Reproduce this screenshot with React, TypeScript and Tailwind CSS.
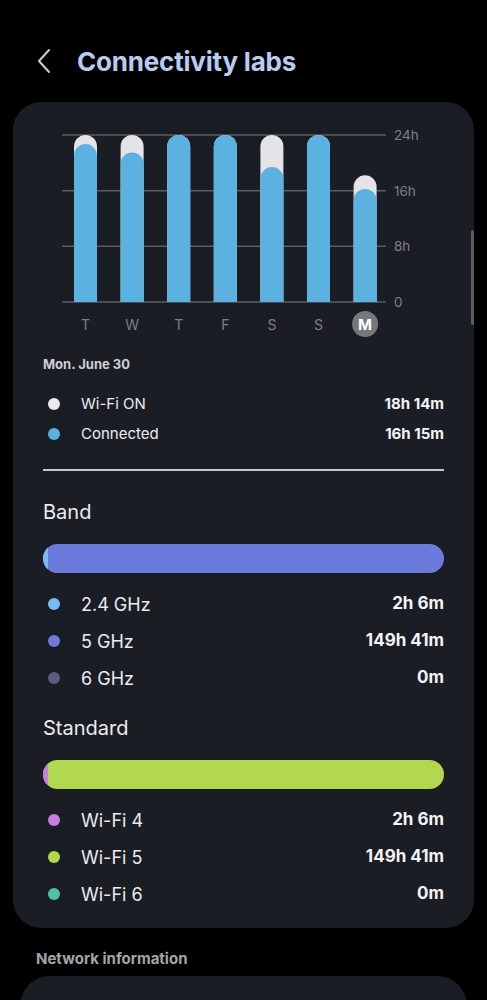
import React from 'react';

const FONT = { fontFamily: 'Inter, "Noto Sans", sans-serif' };

type Bar = { day: string; on: number; conn: number; today?: boolean };

// hours of Wi-Fi on / connected per day
const week: Bar[] = [
  { day: 'T', on: 24, conn: 22.7 },
  { day: 'W', on: 24, conn: 21.5 },
  { day: 'T', on: 24, conn: 24 },
  { day: 'F', on: 24, conn: 24 },
  { day: 'S', on: 24, conn: 19.4 },
  { day: 'S', on: 24, conn: 24 },
  { day: 'M', on: 18.2, conn: 16.25, today: true },
];

const BASE = 182;
const SCALE = 167 / 24;
const BAR_W = 23;

const barPath = (cx: number, top: number) => {
  const r = BAR_W / 2;
  const x0 = cx - r;
  const x1 = cx + r;
  return `M${x0} ${BASE} L${x0} ${top + r} A${r} ${r} 0 0 1 ${x1} ${top + r} L${x1} ${BASE} Z`;
};

const UsageChart = () => {
  const grid = [
    { y: 15, label: '24h' },
    { y: 70.7, label: '16h' },
    { y: 126.3, label: '8h' },
    { y: 182, label: '0' },
  ];
  return (
    <svg width={401} height={220} viewBox="0 0 401 220" className="block">
      {grid.map((g) => (
        <g key={g.label}>
          <line x1={19} x2={343} y1={g.y} y2={g.y} stroke="#5b5d63" strokeWidth={1.5} />
          <text x={351} y={g.y + 5} fontSize={13.5} fill="#7d8088" style={FONT}>
            {g.label}
          </text>
        </g>
      ))}
      {week.map((b, i) => {
        const cx = 42.5 + i * 46.6;
        return (
          <g key={i}>
            <path d={barPath(cx, BASE - b.on * SCALE)} fill="#e4e4e6" />
            <path d={barPath(cx, BASE - b.conn * SCALE)} fill="#5bb2e0" />
            {b.today ? (
              <>
                <circle cx={cx} cy={204} r={13} fill="#76787d" />
                <text x={cx} y={209.5} fontSize={15} fontWeight={700} fill="#ffffff" textAnchor="middle" style={FONT}>
                  {b.day}
                </text>
              </>
            ) : (
              <text x={cx} y={209.5} fontSize={14} fill="#7d8088" textAnchor="middle" style={FONT}>
                {b.day}
              </text>
            )}
          </g>
        );
      })}
    </svg>
  );
};

const LegendRow = ({
  color,
  label,
  value,
  big,
}: {
  color: string;
  label: string;
  value: string;
  big?: boolean;
}) => (
  <div className={`flex items-center ${big ? 'h-[37px]' : 'h-[30px]'}`}>
    <div className="w-[38px] flex pl-[5px]">
      <span className="w-[12px] h-[12px] rounded-full" style={{ backgroundColor: color }} />
    </div>
    <span className={`flex-1 text-[#ececee] ${big ? 'text-[18px]' : 'text-[15px]'}`}>{label}</span>
    <span className={`font-bold text-[#f4f4f5] ${big ? 'text-[17px]' : 'text-[15px]'}`}>{value}</span>
  </div>
);

const StackBar = ({ first, rest }: { first: string; rest: string }) => (
  <div className="h-[29px] rounded-full overflow-hidden flex" style={{ backgroundColor: rest }}>
    <div className="w-[5px] h-full" style={{ backgroundColor: first }} />
  </div>
);

export default function App() {
  return (
    <div className="min-h-screen bg-black text-white relative" style={FONT}>
      {/* Header */}
      <div className="h-[102px] flex items-center pl-[36px] pt-[20px]">
        <svg width="16" height="26" viewBox="0 0 16 26" className="mr-[25px]">
          <path d="M13 2 L3 13 L13 24" fill="none" stroke="#c9cdd4" strokeWidth="2" strokeLinecap="round" strokeLinejoin="round" />
        </svg>
        <h1 className="text-[26px] font-bold text-[#b7ccf1] tracking-[-0.2px]">Connectivity labs</h1>
      </div>

      {/* Main card */}
      <div className="mx-[13px] rounded-[28px] bg-[#1b1d25] px-[30px] pt-[18px] pb-[15px]">
        <UsageChart />

        <div className="mt-[16px] h-[18px] flex items-center text-[13px] font-bold text-[#cfd0d4]">Mon. June 30</div>

        <div className="mt-[15px]">
          <LegendRow color="#ebebed" label="Wi-Fi ON" value="18h 14m" />
          <LegendRow color="#5bb2e0" label="Connected" value="16h 15m" />
        </div>

        <div className="mt-[20px] h-[1.5px] bg-[#c6c7cc]" />

        <div className="mt-[27px] h-[28px] flex items-center text-[20px] text-[#ececee]">Band</div>
        <div className="mt-[18px]">
          <StackBar first="#7cbaf2" rest="#6b7bdb" />
        </div>
        <div className="mt-[13px]">
          <LegendRow big color="#7cbaf2" label="2.4 GHz" value="2h 6m" />
          <LegendRow big color="#6b7bdb" label="5 GHz" value="149h 41m" />
          <LegendRow big color="#5c5c80" label="6 GHz" value="0m" />
        </div>

        <div className="mt-[17px] h-[28px] flex items-center text-[20px] text-[#ececee]">Standard</div>
        <div className="mt-[18px]">
          <StackBar first="#c47fe0" rest="#b1d84e" />
        </div>
        <div className="mt-[13px]">
          <LegendRow big color="#c47fe0" label="Wi-Fi 4" value="2h 6m" />
          <LegendRow big color="#b1d84e" label="Wi-Fi 5" value="149h 41m" />
          <LegendRow big color="#52bfa9" label="Wi-Fi 6" value="0m" />
        </div>
      </div>

      <div className="mt-[22px] pl-[36px] h-[20px] flex items-center text-[15px] font-bold text-[#a3a5ab]">
        Network information
      </div>
      <div className="mt-[6px] mx-[20px] h-[80px] rounded-[30px] bg-[#1b1d25]" />

      {/* scrollbar */}
      <div className="absolute left-[471px] top-[230px] w-[3px] h-[95px] rounded-full bg-[#5c5e64]" />
    </div>
  );
}
